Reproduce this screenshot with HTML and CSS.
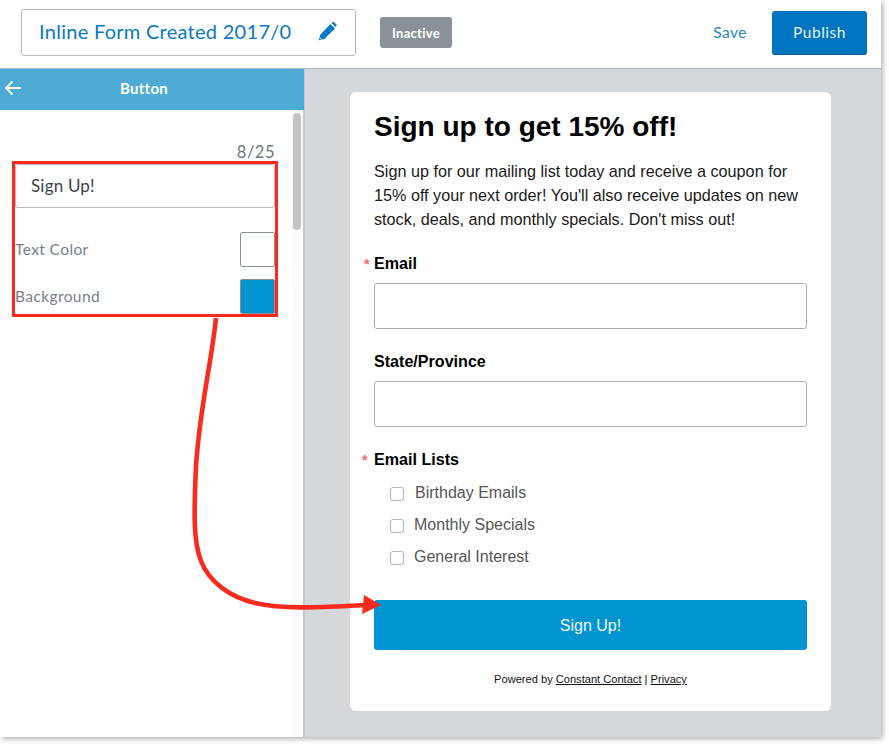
FILE: index.html
```html
<!DOCTYPE html>
<html lang="en">
<head>
<meta charset="utf-8">
<title>Inline Form</title>
<link rel="stylesheet" href="styles.css">
</head>
<body>
<div class="window">
  <header class="topbar">
    <div class="name-field">
      <span class="name-text">Inline Form Created 2017/03</span>
      <svg class="pencil" width="21" height="21" viewBox="0 0 21 21"><path fill="#0a78c2" d="M14.6 1.900l1.700-1.300 3.600 3.500-1.400 1.800zM13.400 3l4.600 4.400L7.400 18 1.800 19.300 3 14z"/><path fill="#fff" d="M2.500 15.800l2.500 2.500-.8.300-2-2z"/></svg>
    </div>
    <span class="badge">Inactive</span>
    <a class="save">Save</a>
    <button class="publish">Publish</button>
  </header>
  <div class="main">
    <aside class="side">
      <div class="side-head">
        <svg class="back" width="18" height="16" viewBox="0 0 18 16"><path fill="none" stroke="#fff" stroke-width="1.800" d="M17 8H2M8.500 1.500L2 8l6.500 6.500"/></svg>
        <span class="side-title">Button</span>
      </div>
      <div class="side-body">
        <div class="side-content">
          <div class="count">8/25</div>
          <div class="text-input">Sign Up!</div>
          <div class="color-row first"><span>Text Color</span><i class="swatch white"></i></div>
          <div class="color-row"><span>Background</span><i class="swatch blue"></i></div>
        </div>
        <div class="scroll-track"><div class="scroll-thumb"></div></div>
      </div>
    </aside>
    <section class="canvas">
      <form class="card">
        <h1>Sign up to get 15% off!</h1>
        <p class="intro">Sign up for our mailing list today and receive a coupon for 15% off your next order! You'll also receive updates on new stock, deals, and monthly specials. Don't miss out!</p>
        <label class="label req">Email</label>
        <div class="field"></div>
        <label class="label">State/Province</label>
        <div class="field"></div>
        <label class="label req lists">Email Lists</label>
        <div class="check c1"><i></i><span>Birthday Emails</span></div>
        <div class="check c2"><i></i><span>Monthly Specials</span></div>
        <div class="check c3"><i></i><span>General Interest</span></div>
        <div class="submit">Sign Up!</div>
        <div class="powered">Powered by <u>Constant Contact</u> | <u>Privacy</u></div>
      </form>
    </section>
  </div>
  <div class="highlight"></div>
  <svg class="arrow" width="400" height="320" viewBox="0 0 400 320">
    <path fill="none" stroke="#fb2a1e" stroke-width="4.600" d="M36 2C31 50 20 90 16 150C14 195 13 225 21 245C29 266 50 281 75 287C100 293 135 292 186 289"/>
    <path fill="#fb2a1e" d="M184 279L201 289L182 298Z"/>
  </svg>
</div>
</body>
</html>
```
FILE: styles.css
```css
* { box-sizing: border-box; }
html, body { margin: 0; padding: 0; background: #fff; }
body { width: 889px; height: 746px; overflow: hidden; font-family: "Lato", sans-serif; }
.window {
  position: relative;
  width: 881px;
  height: 737px;
  background: #fff;
  box-shadow: 2px 2px 5px rgba(0, 0, 0, .3);
  display: flex;
  flex-direction: column;
}
.topbar {
  height: 69px;
  flex: none;
  display: flex;
  align-items: flex-start;
  border-bottom: 1px solid #b3b8bc;
  padding: 9px 14px 0 21px;
}
.name-field {
  width: 335px;
  height: 47px;
  border: 1px solid #b4b9bc;
  border-radius: 3px;
  display: flex;
  align-items: center;
  padding: 0 17px 3px 17px;
  justify-content: space-between;
}
.name-text {
  width: 252px;
  overflow: hidden;
  white-space: nowrap;
  color: #0a78c2;
  font-size: 20px;
  letter-spacing: .28px;
}
.pencil { flex: none; }
.badge {
  margin: 8px 0 0 24px;
  width: 72px;
  height: 31px;
  border-radius: 3px;
  background: #8a9299;
  color: #fff;
  font-size: 13px;
  font-weight: 700;
  display: flex;
  align-items: center;
  justify-content: center;
  letter-spacing: .3px;
}
.save {
  margin: 14px 0 0 auto;
  color: #2b83c4;
  font-size: 15.500px;
  letter-spacing: .5px;
}
.publish {
  margin: 2px 0 0 25px;
  width: 95px;
  height: 44px;
  border: 0;
  border-bottom: 1px solid #05588f;
  border-radius: 3px;
  padding: 0 0 2px;
  background: #0075bf;
  color: #e6f2fa;
  font: 400 15.500px "Lato", sans-serif;
  letter-spacing: .5px;
}
.main { flex: 1; display: flex; min-height: 0; }
.side { width: 305px; flex: none; border-right: 2px solid #c4c8cb; display: flex; flex-direction: column; }
.side-head {
  position: relative;
  height: 41px;
  margin-right: -1px;
  flex: none;
  background: #4eabd5;
  color: #fff;
  font-size: 15px;
  font-weight: 700;
  letter-spacing: .3px;
  display: flex;
  align-items: center;
  justify-content: center;
  padding: 0 16px 4px 0;
}
.back { position: absolute; left: 4px; top: 11px; }
.side-body { flex: 1; display: flex; }
.side-content { width: 292px; flex: none; padding: 32px 17px 0 15px; }
.count { text-align: right; font-size: 16.500px; color: #6d7780; line-height: 20px; letter-spacing: .5px; }
.text-input {
  height: 44px;
  margin-top: 2px;
  border: 1px solid #b4b9bc;
  border-radius: 3px;
  padding-left: 15px;
  font-size: 17px;
  letter-spacing: .2px;
  color: #39434c;
  line-height: 41px;
}
.color-row {
  display: flex;
  justify-content: space-between;
  align-items: center;
  color: #76818a;
  font-size: 15.500px;
  letter-spacing: .4px;
  margin-top: 12px;
  height: 35px;
}
.color-row.first { margin-top: 24px; }
.color-row span { margin-top: -2px; }
.swatch { display: block; width: 35px; height: 35px; border: 1px solid #87919a; border-radius: 2px; }
.swatch.white { background: #fff; }
.swatch.blue { background: #0094d0; }
.scroll-track { flex: 1; background: #fafafa; position: relative; }
.scroll-thumb { position: absolute; left: 1px; top: 3px; width: 8px; height: 117px; border-radius: 4px; background: #c3c3c3; }
.canvas { flex: 1; background: #d5d8db; padding: 23px 0 0 45px; }
.card {
  width: 481px;
  height: 619px;
  background: #fff;
  border-radius: 6px;
  padding: 18px 24px 0;
  font-family: "Liberation Sans", sans-serif;
  display: flex;
  flex-direction: column;
}
h1 { margin: 0; font-size: 28px; line-height: 34px; font-weight: 700; color: #000; }
.intro { margin: 15px 0 0; font-size: 16.200px; line-height: 24px; color: #1a1a1a; }
.label { position: relative; margin-top: 22px; font-size: 16.100px; line-height: 20px; font-weight: 700; color: #000; }
.label.req::before { content: "*"; position: absolute; left: -10px; top: 1px; font-weight: 700; font-size: 14px; color: #f26a6a; }
.label.lists::before { left: -12px; }
.field { height: 46px; margin-top: 10px; border: 1px solid #a9aeb2; border-radius: 3px; }
.field + .label { margin-top: 22px; }
.check { display: flex; align-items: center; height: 32px; font-size: 16px; color: #555; padding-left: 16px; }
.check i { display: block; width: 14px; height: 14px; border: 1px solid #b3b3b3; border-radius: 3px; margin-top: 2px; }
.label + .check { margin-top: 8px; }
.c1 span { margin-left: 11px; }
.c2 span { margin-left: 10px; }
.c3 span { margin-left: 10px; }
.submit {
  margin-top: 27px;
  height: 50px;
  flex: none;
  border-radius: 3px;
  padding-top: 2px;
  background: #0094d0;
  color: #f2f9fc;
  font-size: 16px;
  display: flex;
  align-items: center;
  justify-content: center;
}
.powered { margin-top: 21px; text-align: center; font-size: 11.100px; line-height: 16px; color: #111; }
.highlight {
  position: absolute;
  left: 12px;
  top: 161px;
  width: 266px;
  height: 156px;
  border: 3px solid #fb2a1e;
}
.arrow { position: absolute; left: 180px; top: 316px; pointer-events: none; }
```
